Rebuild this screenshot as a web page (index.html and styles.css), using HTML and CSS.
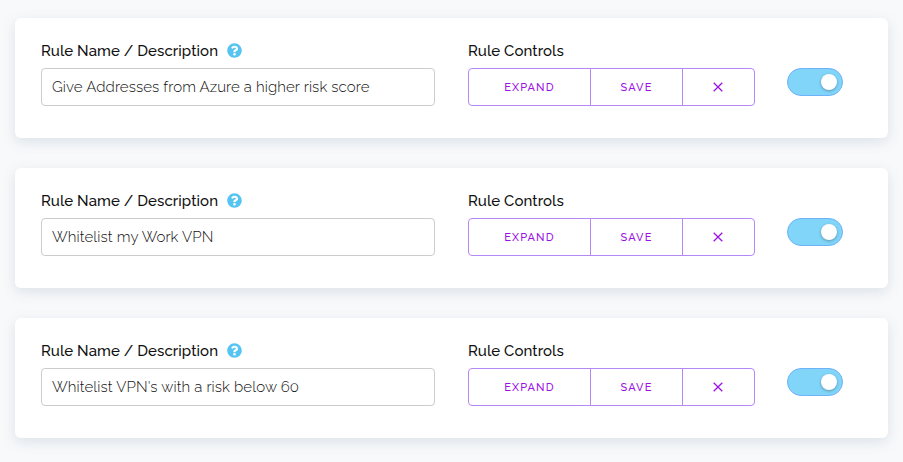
FILE: index.html
```html
<!DOCTYPE html>
<html lang="en">
<head>
    <meta charset="UTF-8">
    <meta name="viewport" content="width=device-width, initial-scale=1.0">
    <title>Rules</title>
    <link rel="stylesheet" href="styles.css">
</head>
<body>
    <!-- Shared icons -->
    <svg class="icon-defs" width="0" height="0">
        <symbol id="icon-help" viewBox="0 0 512 512">
            <path d="M504 256c0 137-111 248-248 248S8 393 8 256 119 8 256 8s248 111 248 248zM262.700 90c-54.500 0-89.200 23-116.500 63.800-3.500 5.300-2.400 12.400 2.700 16.300l34.700 26.300c5.200 3.900 12.600 3 16.700-2.100 17.900-22.700 30.100-35.800 57.300-35.800 20.400 0 45.700 13.100 45.700 33 0 15-12.400 22.700-32.500 34C247.100 238.500 216 254.900 216 296v4c0 6.600 5.400 12 12 12h56c6.600 0 12-5.400 12-12v-1.300c0-28.500 83.200-29.600 83.200-106.700 0-58-60.200-102-116.500-102zM256 338c-25.400 0-46 20.600-46 46s20.600 46 46 46 46-20.600 46-46-20.600-46-46-46z"/>
        </symbol>
        <symbol id="icon-close" viewBox="0 0 10 10">
            <path d="M.7.7l8.600 8.600M9.300.7L.7 9.300"/>
        </symbol>
    </svg>

    <div class="rules">
        <div class="rule-card">
            <div class="rule-name">
                <div class="label"><span>Rule Name / Description</span><svg class="help"><use href="#icon-help"/></svg></div>
                <input class="name-input" type="text" value="Give Addresses from Azure a higher risk score">
            </div>
            <div class="rule-controls">
                <div class="label">Rule Controls</div>
                <div class="btn-group">
                    <button class="btn btn-expand">EXPAND</button>
                    <button class="btn btn-save">SAVE</button>
                    <button class="btn btn-delete" aria-label="Delete"><svg class="close"><use href="#icon-close"/></svg></button>
                </div>
            </div>
            <label class="switch"><input type="checkbox" checked><span class="knob"></span></label>
        </div>

        <div class="rule-card">
            <div class="rule-name">
                <div class="label"><span>Rule Name / Description</span><svg class="help"><use href="#icon-help"/></svg></div>
                <input class="name-input" type="text" value="Whitelist my Work VPN">
            </div>
            <div class="rule-controls">
                <div class="label">Rule Controls</div>
                <div class="btn-group">
                    <button class="btn btn-expand">EXPAND</button>
                    <button class="btn btn-save">SAVE</button>
                    <button class="btn btn-delete" aria-label="Delete"><svg class="close"><use href="#icon-close"/></svg></button>
                </div>
            </div>
            <label class="switch"><input type="checkbox" checked><span class="knob"></span></label>
        </div>

        <div class="rule-card">
            <div class="rule-name">
                <div class="label"><span>Rule Name / Description</span><svg class="help"><use href="#icon-help"/></svg></div>
                <input class="name-input" type="text" value="Whitelist VPN's with a risk below 60">
            </div>
            <div class="rule-controls">
                <div class="label">Rule Controls</div>
                <div class="btn-group">
                    <button class="btn btn-expand">EXPAND</button>
                    <button class="btn btn-save">SAVE</button>
                    <button class="btn btn-delete" aria-label="Delete"><svg class="close"><use href="#icon-close"/></svg></button>
                </div>
            </div>
            <label class="switch"><input type="checkbox" checked><span class="knob"></span></label>
        </div>
    </div>
</body>
</html>
```
FILE: styles.css
```css
* {
    box-sizing: border-box;
}

body {
    margin: 0;
    background-color: #f8f9fb;
    color: #111;
    font-family: Raleway, Lato, "Open Sans", sans-serif;
    font-size: 15px;
    overflow: hidden;
}

.icon-defs {
    position: absolute;
}

.rules {
    display: flex;
    flex-direction: column;
    gap: 30px;
    padding: 18px 15px;
}

.rule-card {
    display: flex;
    height: 120px;
    padding: 22px 26px;
    background-color: #fff;
    border-radius: 6px;
    box-shadow: 0 4px 14px rgba(50, 90, 120, 0.14);
}

.rule-name {
    width: 394px;
    margin-right: 33px;
}

.rule-controls {
    width: 287px;
    margin-right: 32px;
}

.label {
    display: flex;
    align-items: center;
    height: 22px;
    margin-bottom: 6px;
    font-weight: 500;
    letter-spacing: 0.08px;
    white-space: nowrap;
}

.help {
    width: 15px;
    height: 15px;
    margin: 0 0 2px 9px;
    fill: #56c4f2;
}

.name-input {
    display: block;
    width: 100%;
    height: 38px;
    padding: 0 10px;
    border: 1px solid #ccc;
    border-radius: 4px;
    background-color: #fff;
    color: #111;
    font-family: inherit;
    font-size: 15px;
    font-weight: 300;
    letter-spacing: 0.11px;
}

.btn-group {
    display: flex;
    height: 38px;
    border: 1px solid #b588f5;
    border-radius: 4px;
}

.btn {
    display: flex;
    align-items: center;
    justify-content: center;
    padding: 0;
    border: 0;
    background: none;
    color: #9c12e6;
    font-family: inherit;
    font-size: 11px;
    font-weight: 500;
    letter-spacing: 1.1px;
}

.btn + .btn {
    border-left: 1px solid #b588f5;
}

.btn-expand {
    width: 121px;
}

.btn-save {
    width: 92px;
}

.btn-delete {
    flex: 1;
    padding: 0 2px 1px 0;
}

.close {
    width: 10px;
    height: 10px;
    stroke: #9c12e6;
    stroke-width: 1.3;
}

.switch {
    display: flex;
    align-items: center;
    justify-content: flex-end;
    width: 56px;
    height: 28px;
    margin-top: 28px;
    padding-right: 5px;
    border: 1px solid #6fb1fa;
    border-radius: 14px;
    background-color: #80d5f8;
}

.switch input {
    display: none;
}

.knob {
    width: 16px;
    height: 16px;
    border-radius: 50%;
    background-color: #fff;
    box-shadow: 0 1px 3px rgba(0, 0, 0, 0.3);
}
```
